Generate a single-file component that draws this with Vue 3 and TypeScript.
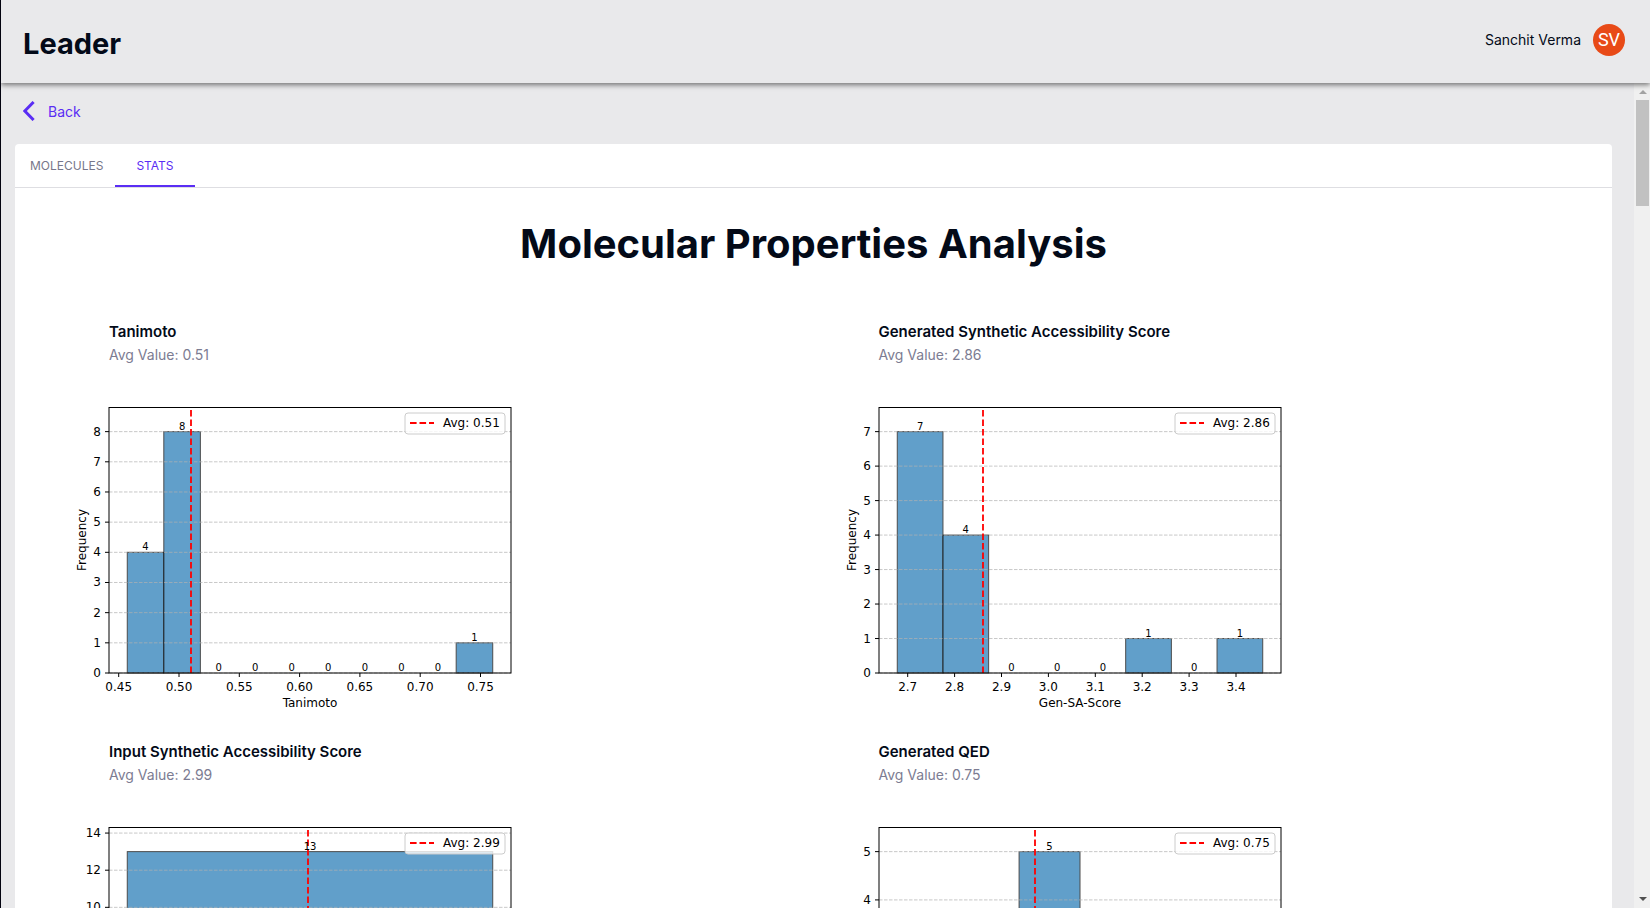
<script setup lang="ts">
import { ref } from 'vue'

interface Bar { bin: number; count: number }
interface Tick { label: string; x: number }
interface Chart {
  title: string
  avg: string
  avgX: number
  xLabel: string
  bins: number
  yMax: number
  yTicks: number[]
  xTicks: Tick[]
  bars: Bar[]
}

const plot = { left: 40, right: 442, top: 10.5, bottom: 276 }
const margin = (plot.right - plot.left) / 22

const barsFrom = (counts: number[]): Bar[] => counts.map((count, bin) => ({ bin, count }))
const ticksFrom = (labels: string[], start: number, step: number): Tick[] =>
  labels.map((label, i) => ({ label, x: start + i * step }))

const charts: Chart[] = [
  {
    title: 'Tanimoto',
    avg: '0.51',
    avgX: 122,
    xLabel: 'Tanimoto',
    bins: 10,
    yMax: 8.8,
    yTicks: [0, 1, 2, 3, 4, 5, 6, 7, 8],
    xTicks: ticksFrom(['0.45', '0.50', '0.55', '0.60', '0.65', '0.70', '0.75'], 49.7, 60.3),
    bars: barsFrom([4, 8, 0, 0, 0, 0, 0, 0, 0, 1]),
  },
  {
    title: 'Generated Synthetic Accessibility Score',
    avg: '2.86',
    avgX: 144,
    xLabel: 'Gen-SA-Score',
    bins: 8,
    yMax: 7.7,
    yTicks: [0, 1, 2, 3, 4, 5, 6, 7],
    xTicks: ticksFrom(['2.7', '2.8', '2.9', '3.0', '3.1', '3.2', '3.3', '3.4'], 68.7, 46.9),
    bars: barsFrom([7, 4, 0, 0, 0, 1, 0, 1]),
  },
  {
    title: 'Input Synthetic Accessibility Score',
    avg: '2.99',
    avgX: 239,
    xLabel: '',
    bins: 1,
    yMax: 14.3,
    yTicks: [10, 12, 14],
    xTicks: [],
    bars: [{ bin: 0, count: 13 }],
  },
  {
    title: 'Generated QED',
    avg: '0.75',
    avgX: 196,
    xLabel: '',
    bins: 6,
    yMax: 5.5,
    yTicks: [4, 5],
    xTicks: [],
    bars: [{ bin: 2, count: 5 }],
  },
]

const tabs = ['Molecules', 'Stats']
const activeTab = ref('Stats')

const yPos = (c: Chart, v: number) => plot.bottom - ((plot.bottom - plot.top) * v) / c.yMax
const binWidth = (c: Chart) => (plot.right - plot.left - 2 * margin) / c.bins
const barX = (c: Chart, bin: number) => plot.left + margin + bin * binWidth(c)
</script>

<template>
  <div class="page">
    <header class="topbar">
      <h1 class="brand">Leader</h1>
      <div class="user">
        <span class="user-name">Sanchit Verma</span>
        <span class="avatar">SV</span>
      </div>
    </header>

    <div class="body">
      <main class="content">
        <a class="back" href="#">
          <svg class="chevron" viewBox="0 0 12 20" aria-hidden="true">
            <path d="M10.6 1 L1.8 10 L10.6 19" />
          </svg>
          Back
        </a>

        <section class="card">
          <nav class="tabs" role="tablist">
            <button
              v-for="tab in tabs"
              :key="tab"
              type="button"
              role="tab"
              class="tab"
              :class="{ active: tab === activeTab }"
              :aria-selected="tab === activeTab"
              @click="activeTab = tab"
            >{{ tab }}</button>
          </nav>

          <h2 class="heading">Molecular Properties Analysis</h2>

          <div class="charts">
            <article v-for="c in charts" :key="c.title" class="chart">
              <h3 class="chart-title">{{ c.title }}</h3>
              <p class="chart-avg">Avg Value: {{ c.avg }}</p>
              <svg class="plot" viewBox="0 0 452 320" role="img" :aria-label="c.title">
                <g class="bars">
                  <rect
                    v-for="b in c.bars"
                    :key="b.bin"
                    :x="barX(c, b.bin)"
                    :y="yPos(c, b.count)"
                    :width="binWidth(c)"
                    :height="plot.bottom - yPos(c, b.count)"
                  />
                </g>
                <g class="grid">
                  <line v-for="t in c.yTicks" :key="t" :x1="plot.left" :x2="plot.right" :y1="yPos(c, t)" :y2="yPos(c, t)" />
                </g>
                <line class="avg-line" :x1="c.avgX" :x2="c.avgX" :y1="plot.bottom" :y2="plot.top + 1" />
                <rect class="frame" :x="plot.left" :y="plot.top" :width="plot.right - plot.left" :height="plot.bottom - plot.top" />
                <g class="ticks">
                  <line v-for="t in c.yTicks" :key="'y' + t" :x1="plot.left - 4" :x2="plot.left" :y1="yPos(c, t)" :y2="yPos(c, t)" />
                  <line v-for="t in c.xTicks" :key="'x' + t.label" :x1="t.x" :x2="t.x" :y1="plot.bottom" :y2="plot.bottom + 4" />
                </g>
                <g class="labels">
                  <text v-for="t in c.yTicks" :key="'y' + t" class="end" x="32" :y="yPos(c, t) + 4">{{ t }}</text>
                  <text v-for="t in c.xTicks" :key="'x' + t.label" class="mid" :x="t.x" y="294">{{ t.label }}</text>
                  <text v-if="c.xLabel" class="mid" x="241" y="310">{{ c.xLabel }}</text>
                  <text class="mid" x="-143" y="17" transform="rotate(-90)">Frequency</text>
                </g>
                <g class="counts">
                  <text
                    v-for="b in c.bars"
                    :key="b.bin"
                    class="mid"
                    :x="barX(c, b.bin) + binWidth(c) / 2"
                    :y="yPos(c, b.count) - 2"
                  >{{ b.count }}</text>
                </g>
                <g class="legend">
                  <rect x="336" y="16" width="100" height="21" rx="3" />
                  <line x1="341" x2="365" y1="26" y2="26" />
                  <text x="374" y="30">Avg: {{ c.avg }}</text>
                </g>
              </svg>
            </article>
          </div>
        </section>
      </main>

      <div class="scrollbar" aria-hidden="true">
        <svg class="arrow up" viewBox="0 0 8 4"><path d="M0 4 L4 0 L8 4 Z" /></svg>
        <div class="thumb"></div>
        <svg class="arrow down" viewBox="0 0 8 4"><path d="M0 0 L4 4 L8 0 Z" /></svg>
      </div>
    </div>
  </div>
</template>

<style>
body {
  background: #e9e9eb;
}
</style>

<style scoped>
.page {
  box-sizing: border-box;
  height: 100vh;
  display: flex;
  flex-direction: column;
  overflow: hidden;
  border-left: 1px solid #03030f;
  background: #e9e9eb;
  color: #030a18;
  font-family: Inter, "Liberation Sans", sans-serif;
  font-size: 14px;
}
.topbar {
  position: relative;
  z-index: 1;
  flex: none;
  box-sizing: border-box;
  height: 83px;
  padding: 0 25px 0 22px;
  display: flex;
  align-items: center;
  justify-content: space-between;
  background: #e9e9eb;
  box-shadow: 0 2px 5px rgba(0, 0, 0, 0.5);
}
.brand {
  margin: 4px 0 0;
  font-size: 29px;
  line-height: 36px;
  font-weight: 700;
}
.user {
  display: flex;
  align-items: center;
  gap: 12px;
  margin-bottom: 4px;
}
.avatar {
  width: 32px;
  height: 32px;
  border-radius: 50%;
  background: #e84a17;
  color: #fff;
  font-family: Roboto, sans-serif;
  font-size: 18px;
  line-height: 32px;
  text-align: center;
}
.body {
  flex: 1;
  min-height: 0;
  display: flex;
}
.content {
  flex: 1;
  min-width: 0;
  overflow: hidden;
  padding: 0 22px 0 14px;
}
.back {
  display: flex;
  width: fit-content;
  align-items: center;
  gap: 13px;
  margin: 16px 0 0 8px;
  height: 24px;
  color: #5a2df4;
  text-decoration: none;
}
.chevron {
  width: 12px;
  height: 20px;
  fill: none;
  stroke: #5a2df4;
  stroke-width: 3;
}
.card {
  margin-top: 21px;
  background: #fff;
  border-radius: 4px;
}
.tabs {
  display: flex;
  height: 43px;
  border-bottom: 1px solid #dedee2;
}
.tab {
  border: 0;
  border-bottom: 2px solid transparent;
  background: none;
  padding: 2px 12px 0 15px;
  color: #77778a;
  font: 400 12px/39px Inter, "Liberation Sans", sans-serif;
  text-transform: uppercase;
}
.tab.active {
  padding: 2px 21px 0;
  border-bottom-color: #5a2df4;
  color: #5a2df4;
}
.heading {
  margin: 30px 0 0;
  font-size: 40px;
  line-height: 52px;
  font-weight: 700;
  text-align: center;
}
.charts {
  display: grid;
  grid-template-columns: 1fr 1fr;
  padding: 50px 30px 0 28px;
}
.chart {
  height: 420px;
  padding-left: 26px;
}
.chart-title {
  margin: 0 0 0 40px;
  font-size: 15px;
  line-height: 24px;
  font-weight: 600;
}
.chart-avg {
  margin: 0 0 31px 40px;
  color: #7c7c92;
  line-height: 22px;
}
.plot {
  display: block;
  width: 452px;
  max-width: 100%;
  font-family: "DejaVu Sans", sans-serif;
  font-size: 12px;
}
.bars rect {
  fill: #1f77b4;
  stroke: #000;
  opacity: 0.7;
}
.grid line {
  stroke: #b0b0b0;
  stroke-opacity: 0.7;
  stroke-dasharray: 3.5 1.5;
}
.avg-line {
  stroke: #f00;
  stroke-width: 1.8;
  stroke-dasharray: 6.6 2.9;
}
.frame {
  fill: none;
  stroke: #000;
}
.ticks line {
  stroke: #000;
}
.mid {
  text-anchor: middle;
}
.end {
  text-anchor: end;
}
.counts {
  font-size: 10px;
}
.legend rect {
  fill: #fff;
  fill-opacity: 0.8;
  stroke: #ccc;
}
.legend line {
  stroke: #f00;
  stroke-width: 1.8;
  stroke-dasharray: 6.6 2.9;
}
.scrollbar {
  flex: none;
  box-sizing: border-box;
  width: 16px;
  padding: 7px 1px 7px 2px;
  display: flex;
  flex-direction: column;
  align-items: center;
  background: #f0f0f0;
}
.arrow {
  width: 8px;
  height: 4px;
}
.up {
  fill: #a3a3a3;
}
.down {
  margin-top: auto;
  fill: #505050;
}
.thumb {
  width: 100%;
  height: 106px;
  margin-top: 6px;
  background: #c1c1c1;
}
</style>
